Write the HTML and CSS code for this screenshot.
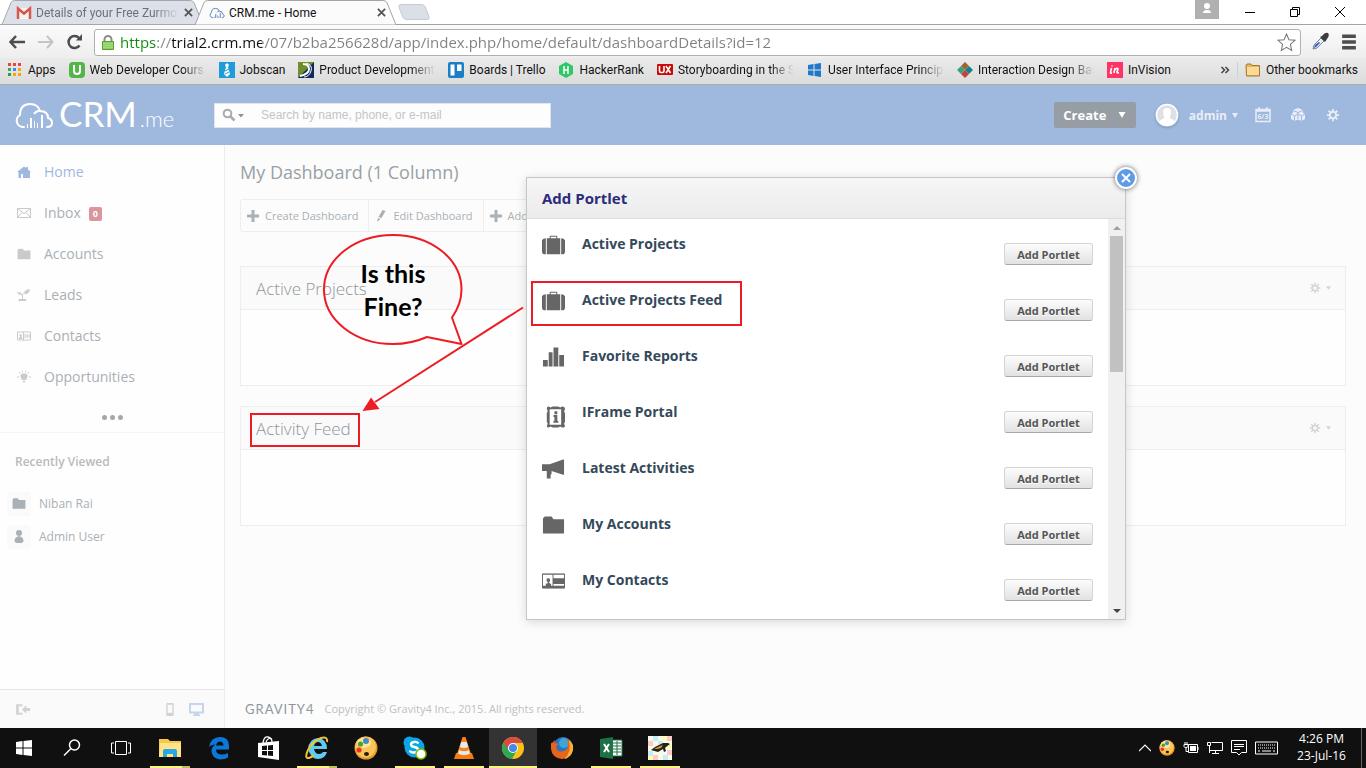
FILE: index.html
```html
<!DOCTYPE html>
<html lang="en">
<head>
<meta charset="utf-8">
<title>CRM.me - Home</title>
<link rel="stylesheet" href="styles.css">
</head>
<body>
<svg class="defs" aria-hidden="true">
  <symbol id="i-folder" viewBox="0 0 24 20"><path d="M1 3 3 1h7l2 3h11v15H1z"/></symbol>
  <symbol id="i-case" viewBox="0 0 24 20"><path d="M0 5Q1 3 4 3v17H2Q0 19 0 17zM5 3h3V1q0-1 1-1h6q1 0 1 1v2h3v17H5zM9 3h6V1.500H9zM20 3q3 0 4 2v12q0 2-2 3h-2z"/></symbol>
  <symbol id="i-card" viewBox="0 0 24 16"><path fill-rule="evenodd" d="M1 0h22q1 0 1 1v14q0 1-1 1H1q-1 0-1-1V1q0-1 1-1zM1 1.500V13h3v-2l2-1V9q-2-1-1-3.500 1.500-1 3 0Q9 8 7.500 9v1l2 1v2H11V1.500zM12 1.500V5h11V1.500zM12 11v2h11v-2z"/></symbol>
  <symbol id="i-cloud" viewBox="0 0 40 27"><path d="M10 25H8A6.500 6.500 0 0 1 6 13Q6 2 16 2q8 0 10 7 8 0 8 7 4 1 4 5 0 4-5 4" fill="none" stroke="currentColor" stroke-width="2" stroke-linecap="round"/><path d="M25 9q-3 0-5 3" fill="none" stroke="currentColor" stroke-width="2"/><path d="M13 22h1v4h-1zM16 16h2v10h-2zM20 19h1v7h-1zM23 21h1v5h-1zM27 13h2v13h-2z" fill="currentColor"/></symbol>
  <symbol id="i-gear" viewBox="0 0 16 16"><path d="M8 1v14M1 8h14M3 3l10 10M13 3 3 13" stroke="currentColor" stroke-width="2"/><circle cx="8" cy="8" r="3.500" stroke="currentColor" stroke-width="2" class="gear-hub"/></symbol>
  <symbol id="i-palette" viewBox="0 0 24 24"><circle cx="12" cy="12" r="11.500" fill="#e79a2c"/><circle cx="11.500" cy="11" r="10.500" fill="#fbc459"/><ellipse cx="10" cy="7" rx="7" ry="5" fill="#ffe49a"/><circle cx="12" cy="5" r="3" fill="#3b8fc0"/><circle cx="6.500" cy="8" r="2.600" fill="#49a32c"/><circle cx="5" cy="14" r="2.600" fill="#e8342a"/><ellipse cx="12.500" cy="18" rx="2.500" ry="2" fill="#2a1a0a"/></symbol>
  <symbol id="i-plus" viewBox="0 0 12 12"><path d="M4.500 0h3v4.500H12v3H7.500V12h-3V7.500H0v-3h4.500z"/></symbol>
</svg>

<header class="browser">
  <div class="tabstrip">
    <div class="tab tab-back">
      <svg class="tab-shape" viewBox="0 0 206 25" preserveAspectRatio="none"><path d="M1 24.500 10 3q1-2.500 4-2.500h178q3 0 4 2.500l9 21.500z" fill="#dce1e9" stroke="#a3a7ad"/></svg>
      <svg class="ic16" viewBox="0 0 16 16"><path d="M2 3h12v11H2z" fill="#f3f3f3"/><path d="M2 14V3.500l6 5 6-5V14" fill="none" stroke="#d8594c" stroke-width="2.500"/></svg>
      <span class="tab-text faded">Details of your Free Zurmo</span>
      <button class="tab-x" aria-label="Close tab"><svg viewBox="0 0 10 10"><path d="m1 1 8 8M9 1 1 9"/></svg></button>
    </div>
    <div class="tab tab-front">
      <svg class="tab-shape" viewBox="0 0 206 25" preserveAspectRatio="none"><path d="M1 25 10 3q1-2.500 4-2.500h178q3 0 4 2.500l9 22z" fill="#fbfbfb" stroke="#a3a3a3"/></svg>
      <svg class="ic16 cloudblue"><use href="#i-cloud"/></svg>
      <span class="tab-text">CRM.me - Home</span>
      <button class="tab-x" aria-label="Close tab"><svg viewBox="0 0 10 10"><path d="m1 1 8 8M9 1 1 9"/></svg></button>
    </div>
    <button class="newtab" aria-label="New tab"><svg viewBox="0 0 34 17"><path d="M4 1h20q3 0 4 2l4 10q1 3-2 3H10q-3 0-4-2L2 4Q1 1 4 1z" fill="#dbe0e7" stroke="#c6cbd2"/></svg></button>
    <div class="winctl">
      <button class="profile" aria-label="Profile"><svg viewBox="0 0 24 19"><path d="M12 3a2.500 2.500 0 0 1 0 6 2.500 2.500 0 0 1 0-6zM8 13q0-3 4-3t4 3z" fill="#fff"/></svg></button>
      <button aria-label="Minimize"><svg viewBox="0 0 12 12"><path d="M1 6.500h10"/></svg></button>
      <button aria-label="Restore"><svg viewBox="0 0 12 12"><path d="M1.500 3.500h7v7h-7zM3.500 3.500v-2h7v7h-2"/></svg></button>
      <button aria-label="Close"><svg viewBox="0 0 12 12"><path d="m1 1 10 10M11 1 1 11"/></svg></button>
    </div>
  </div>
  <div class="toolbar">
    <button aria-label="Back"><svg viewBox="0 0 16 14"><path d="M7 1 1.500 7 7 13M2 7h14" fill="none" stroke="#4d4d4d" stroke-width="2.500"/></svg></button>
    <button aria-label="Forward"><svg viewBox="0 0 16 14"><path d="m9 1 5.500 6L9 13M14 7H0" fill="none" stroke="#c4c4c4" stroke-width="2"/></svg></button>
    <button aria-label="Reload"><svg viewBox="0 0 16 16"><path d="M12.500 11.500A6 6 0 1 1 12 4" fill="none" stroke="#4d4d4d" stroke-width="2.500"/><path d="M9 6.500h6V0z" fill="#4d4d4d"/></svg></button>
    <div class="omnibox">
      <svg class="lock" viewBox="0 0 12 15"><path d="M2.500 7V4.500a3.500 3.500 0 0 1 7 0V7" fill="none" stroke="#8c8c8c" stroke-width="2"/><path d="M.5 6.500h11v8H.5z" fill="#8bd160" stroke="#5a9e35"/><path d="M1 8.500h10M1 10.500h10M1 12.500h10" stroke="#b3e493" opacity=".6"/></svg>
      <input class="url" aria-label="Address" value="https://trial2.crm.me/07/b2ba256628d/app/index.php/home/default/dashboardDetails?id=12">
      <button class="star" aria-label="Bookmark"><svg viewBox="0 0 18 18"><path d="m9 1 2.300 5.300 5.700.6-4.300 3.900 1.200 5.700L9 13.600l-4.900 2.900 1.200-5.700L1 6.900l5.700-.6z" fill="#fff" stroke="#777"/></svg></button>
    </div>
    <button aria-label="Colour picker"><svg class="picker" viewBox="0 0 19 19"><path d="m2 17 1-4 7-7 3 3-7 7z" fill="#e9edf5" stroke="#77829a"/><path d="m3 16 1-3 4-3 1 1-4 4z" fill="#3159c9"/><path d="m9 5 2-1q3-4 6-3 2 2-1 6l-2 3z" fill="#3c3c3c"/></svg></button>
    <button aria-label="Menu"><svg viewBox="0 0 14 14"><path d="M1 2h12M1 7h12M1 12h12" stroke="#4d4d4d" stroke-width="3"/></svg></button>
  </div>
  <nav class="bookmarks" aria-label="Bookmarks">
    <a href="#"><svg class="ic16" viewBox="0 0 16 16"><path d="M1 1h3v3H1zM6 1h3v3H6zM11 1h3v3h-3z" fill="#e8453c"/><path d="M1 6h3v3H1z" fill="#34a853"/><path d="M6 6h3v3H6z" fill="#4285f4"/><path d="M11 6h3v3h-3zM6 11h3v3H6zM11 11h3v3h-3z" fill="#f7a800"/><path d="M1 11h3v3H1z" fill="#2e9b50"/></svg><span>Apps</span></a>
    <a href="#"><svg class="ic16" viewBox="0 0 16 16"><rect width="16" height="16" rx="4" fill="#51b548"/><path d="M5 3v6q0 3 3 3t3-3V3" fill="none" stroke="#fff" stroke-width="2"/></svg><span class="faded">Web Developer Cours</span></a>
    <a href="#"><svg class="ic16" viewBox="0 0 16 16"><path d="M0 0h16v16H0z" fill="#1d9cd9"/><path d="m8 1 2 2-1 2 2 7-3 3-3-3 2-7-1-2z" fill="#fff"/><path d="m6 9 4-2M6 12l4-2" stroke="#1d9cd9"/></svg><span>Jobscan</span></a>
    <a href="#"><svg class="ic16" viewBox="0 0 16 16"><path d="M0 0h16v16H0z" fill="#6f8f2f"/><path d="M0 16 16 0v16z" fill="#112a5c"/><path d="M5 2q6 0 6 5t-9 7" fill="none" stroke="#fff" stroke-width="2"/><path d="M8 1q7 2 5 8t-7 6" fill="none" stroke="#fff"/></svg><span class="faded">Product Development</span></a>
    <a href="#"><svg class="ic16" viewBox="0 0 16 16"><rect width="16" height="16" rx="2" fill="#1a7fc4"/><path d="M2.500 2.500h4v11h-4zM9 2.500h4.500V9H9z" fill="#fff"/></svg><span>Boards | Trello</span></a>
    <a href="#"><svg class="ic16" viewBox="0 0 16 16"><path d="m8 0 7 4v8l-7 4-7-4V4z" fill="#2ec866"/><path d="M6 4v8M10 4v8M6 8h4" stroke="#fff" stroke-width="1.500"/></svg><span>HackerRank</span></a>
    <a href="#"><svg class="ic16" viewBox="0 0 16 16"><rect y="2" width="16" height="11" rx="1" fill="#c90a0a"/><path d="M2.500 4v5q0 1.500 1.500 1.500h1.500Q7 10.500 7 9V4M9 4l4.500 7M13.500 4 9 11" fill="none" stroke="#fff" stroke-width="1.600"/></svg><span class="faded">Storyboarding in the S</span></a>
    <a href="#"><svg class="ic16" viewBox="0 0 16 16"><path d="m1 3 5.500-1v5.500H1zM7.500 2 14 1v6.500H7.500zM1 8.500h5.500V14L1 13zM7.500 8.500H14V15l-6.500-1z" fill="#1f78c8"/></svg><span class="faded">User Interface Principl</span></a>
    <a href="#"><svg class="ic16" viewBox="0 0 16 16"><path d="m8 0 4 4-4 4-4-4z" fill="#a75e30"/><path d="m4 4 4 4-4 4-4-4z" fill="#3aa17f"/><path d="m12 4 4 4-4 4-4-4z" fill="#0f8488"/><path d="m8 8 4 4-4 4-4-4z" fill="#c9403c"/></svg><span class="faded">Interaction Design Bas</span></a>
    <a href="#"><svg class="ic16" viewBox="0 0 16 16"><path d="M0 0h16v16H0z" fill="#ff3366"/><path d="m4.500 6-1 4.500q0 1 1.500.5M5 3.500v1M7 11l1-5M7.500 8q3-3 3.500-1l-1 3q0 1.500 2 .5" fill="none" stroke="#fff" stroke-width="1.600"/></svg><span>InVision</span></a>
    <button class="more" aria-label="More bookmarks"><svg viewBox="0 0 9 8"><path d="m1 1 3 3-3 3M5 1l3 3-3 3" fill="none" stroke="#444" stroke-width="1.500"/></svg></button>
    <a href="#" class="other"><svg class="ic16" viewBox="0 0 16 16"><path d="M1 3.500 2 2h4l1 1.500h7.500V14h-13z" fill="#e6b765" stroke="#a87628"/><path d="M2 5h12v8H2z" fill="#fbdb94"/></svg><span>Other bookmarks</span></a>
  </nav>
</header>

<div class="apphead">
  <a class="logo" href="#" aria-label="CRM.me"><svg viewBox="0 0 40 27"><use href="#i-cloud"/></svg><span class="crm">CRM</span><span class="dotme">.me</span></a>
  <div class="search">
    <button aria-label="Search scope"><svg viewBox="0 0 24 14"><circle cx="5.500" cy="5.500" r="3.800" fill="none" stroke="#a7abb0" stroke-width="2"/><path d="m8.500 8.500 4 4" stroke="#a7abb0" stroke-width="2.500"/><path d="M16 6h6l-3 3.500z" fill="#8f9499"/></svg></button>
    <input type="text" aria-label="Search" placeholder="Search by name, phone, or e-mail">
  </div>
  <div class="headright">
    <button class="create">Create<svg viewBox="0 0 8 7"><path d="M0 0h8L4 7z"/></svg></button>
    <svg class="avatar" viewBox="0 0 24 24"><circle cx="12" cy="12" r="10.500" fill="#dde0e4" stroke="#fff" stroke-width="1.500"/><path d="M4 20q1-4 5-4.500v-2Q6 5 12 5t3 8.500v2q4 .5 5 4.500-8 5-16 0z" fill="#fff"/></svg>
    <button class="admin">admin<svg viewBox="0 0 6 5"><path d="M0 0h6L3 5z"/></svg></button>
    <button class="hicon" aria-label="Calendar"><svg viewBox="0 0 16 16"><path d="M1 2.500h14v12H1zM1 4h14M4 0v3M12 0v3" fill="none" stroke="currentColor" stroke-width="1.500"/><text x="8" y="12" text-anchor="middle" class="caltext">6/3</text></svg></button>
    <button class="hicon" aria-label="Modules"><svg viewBox="0 0 16 16"><path d="m8 1 5 2v3l2 1v5l-3.500 2L8 12.500 4.500 14 1 12V7l2-1V3z" fill="currentColor"/><path d="m3 3.500 5 2 5-2M8 5.500V12M1 7l3.500 2L8 7l3.500 2L15 7M4.500 9v5M11.500 9v5" fill="none" stroke="#9fb8de"/></svg></button>
    <button class="hicon" aria-label="Settings"><svg viewBox="0 0 16 16"><use href="#i-gear"/></svg></button>
  </div>
</div>

<div class="main">
  <aside class="side">
    <nav class="menu">
      <a href="#" class="on"><svg viewBox="0 0 14 12"><path d="m0 6 7-5.500 2 1.500V1h2v2.500l3 2.500h-1v6H6V8H4v4H1.500V6z"/></svg>Home</a>
      <a href="#"><svg viewBox="0 0 14 10"><path d="M.5.5h13v9H.5zl6.500 5 6.500-5M.5 9.500l4.500-5M13.500 9.500 9 4.500" fill="none" stroke="currentColor"/></svg>Inbox<span class="badge">0</span></a>
      <a href="#"><svg viewBox="0 0 24 20"><use href="#i-folder"/></svg>Accounts</a>
      <a href="#"><svg viewBox="0 0 14 12"><path d="M2 10h7v2H1zM5 5h1v5H5zM6 5q1-4 7-5-1 6-6 5l3-3zM0 3q5 0 5 3-4 0-5-3z"/></svg>Leads</a>
      <a href="#"><svg viewBox="0 0 14 9"><path d="M.5.5h13v8H.5zM6.500 0v9M7 3.500h6M7 5.500h6" fill="none" stroke="currentColor"/><path d="M3.500 2.500q2 0 1 2.500l1 2.500h-4L3 5q-1-2.500.5-2.500z"/></svg>Contacts</a>
      <a href="#"><svg viewBox="0 0 14 12"><path d="M7 2.500q4 0 3.500 3.500L9 9H5L3.500 6Q3 2.500 7 2.500zM5.500 10h3L7 12z"/><path d="M0 6h2M12 6h2M2 1l1.500 1.500M12 1l-1.500 1.500M5 0l.5 1.500M9 0l-.5 1.500" stroke="currentColor"/></svg>Opportunities</a>
    </nav>
    <button class="dots" aria-label="More"><i></i><i></i><i></i></button>
    <section class="recent">
      <h2>Recently Viewed</h2>
      <a href="#"><span class="tile"><svg viewBox="0 0 24 20"><use href="#i-folder"/></svg></span>Niban Rai</a>
      <a href="#"><span class="tile"><svg viewBox="0 0 14 13"><circle cx="7" cy="3" r="3"/><path d="M7 6q4.500 1 4.500 5 0 2-4.500 2t-4.500-2q0-4 4.500-5z"/></svg></span>Admin User</a>
    </section>
    <div class="sidefoot">
      <button aria-label="Collapse"><svg viewBox="0 0 14 12"><path d="M7 1H1v10h6V9H3.500V3H7zM6.500 6l4-4v2.500H14v3h-3.500V10z" fill="#d3d3d3"/></svg></button>
      <button class="phone" aria-label="Mobile view"><svg viewBox="0 0 8 14"><path fill-rule="evenodd" d="M1 0h6q1 0 1 1v12q0 1-1 1H1q-1 0-1-1V1q0-1 1-1zM1.500 2v8.500h5V2z" fill="#d3d3d3"/></svg></button>
      <button aria-label="Desktop view"><svg viewBox="0 0 15 13"><path fill-rule="evenodd" d="M0 0h15v10.500H9.500L11 12v1H4v-1l1.500-1.500H0zM2 2v6.500h11V2z" fill="#c6d5eb"/></svg></button>
    </div>
  </aside>

  <main class="content">
    <h1>My Dashboard (1 Column)</h1>
    <div class="actions">
      <button><svg viewBox="0 0 12 12"><use href="#i-plus"/></svg>Create Dashboard</button>
      <button><svg viewBox="0 0 12 12"><path d="m7.500 0 3 1-4 7-3-1zM3 8l2.500 1L2 12z"/></svg>Edit Dashboard</button>
      <button><svg viewBox="0 0 12 12"><use href="#i-plus"/></svg>Add Portlet</button>
    </div>
    <section class="portlet">
      <header><h2>Active Projects</h2><button aria-label="Portlet options"><svg class="pgear" viewBox="0 0 16 16"><use href="#i-gear"/></svg><svg class="caret" viewBox="0 0 6 4"><path d="M0 0h6L3 4z"/></svg></button></header>
      <div class="pbody"></div>
    </section>
    <section class="portlet">
      <header><h2>Activity Feed</h2><button aria-label="Portlet options"><svg class="pgear" viewBox="0 0 16 16"><use href="#i-gear"/></svg><svg class="caret" viewBox="0 0 6 4"><path d="M0 0h6L3 4z"/></svg></button></header>
      <div class="pbody"></div>
    </section>
    <footer><span class="gravity">GRAVITY4</span><span>Copyright © Gravity4 Inc., 2015. All rights reserved.</span></footer>
  </main>

  <div class="modal" role="dialog" aria-labelledby="dlg-title">
    <h2 id="dlg-title">Add Portlet</h2>
    <button class="close" aria-label="Close"><svg viewBox="0 0 10 10"><path d="m1 1 8 8M9 1 1 9"/></svg></button>
    <div class="modalbody">
      <ul>
        <li><svg viewBox="0 0 24 20"><use href="#i-case"/></svg><h3>Active Projects</h3><button>Add Portlet</button></li>
        <li><svg viewBox="0 0 24 20"><use href="#i-case"/></svg><h3>Active Projects Feed</h3><button>Add Portlet</button></li>
        <li><svg viewBox="0 0 24 20"><path d="M1 13h5v7H1zM7 5h4v15H7zM12 0h5v20h-5zM18 8h5v12h-5z"/></svg><h3>Favorite Reports</h3><button>Add Portlet</button></li>
        <li><svg class="tall" viewBox="0 0 24 24"><path fill-rule="evenodd" d="M5 3q0-2 2-2l2 1 2-1h6l2 1 2-1q3 0 3 3l-1 2 1 2v9l-1 2 1 2q0 2-3 2l-2-1-2 1h-6l-2-1-2 1q-2 0-2-2l1-2-1-2V8l1-2zM8 4v16h12V4z"/><path d="M13 6h3v3h-3zM12 10h4v6h1v2h-5v-2h1v-4h-1z"/></svg><h3>IFrame Portal</h3><button>Add Portlet</button></li>
        <li><svg viewBox="0 0 24 20"><path d="M0 5h8l14-5h1v16h-1L10 12v3l-1 1v4H5v-8H0z"/></svg><h3>Latest Activities</h3><button>Add Portlet</button></li>
        <li><svg viewBox="0 0 24 20"><use href="#i-folder"/></svg><h3>My Accounts</h3><button>Add Portlet</button></li>
        <li><svg viewBox="0 0 24 16"><use href="#i-card"/></svg><h3>My Contacts</h3><button>Add Portlet</button></li>
      </ul>
      <div class="scroll"><svg viewBox="0 0 8 4"><path d="M0 4h8L4 0z" fill="#a0a0a0"/></svg><i></i><svg class="down" viewBox="0 0 8 4"><path d="M0 0h8L4 4z" fill="#444"/></svg></div>
    </div>
  </div>

  <div class="notes">
    <svg viewBox="0 0 280 190"><path d="M129 83.500Q138.500 70 138.500 55.500C138.500 25 108 1 70 1S1 25 1 55.500 32 110 70 110q18 0 34-7l34.500 7z" fill="none" stroke="#ec1c24" stroke-width="2" stroke-linejoin="round"/><path d="M200 73.500 52 168" stroke="#ec1c24" stroke-width="2"/><path d="m39.500 177 8.500-13.500 8.500 11.500z" fill="#ec1c24"/></svg>
    <p>Is this<br>Fine?</p>
  </div>
  <div class="mark mark-feed"></div>
  <div class="mark mark-row"></div>
</div>

<div class="taskbar">
  <button aria-label="Start"><svg viewBox="0 0 24 24"><path d="m4 6 6.500-1v6.500H4zM11.500 5 20 4v7.500h-8.500zM4 12.500h6.500V19L4 18zM11.500 12.500H20V20l-8.500-1z" fill="#fff"/></svg></button>
  <button aria-label="Search"><svg viewBox="0 0 24 24"><circle cx="14.500" cy="9" r="5" fill="none" stroke="#fff" stroke-width="1.500"/><path d="m11 12.500-7 7" stroke="#fff" stroke-width="1.500"/></svg></button>
  <button aria-label="Task view"><svg viewBox="0 0 24 24"><path d="M6.500 5.500h11v13h-11zM5 7H2.500v10H5M19 7h2.500v10H19" fill="none" stroke="#fff"/></svg></button>
  <button class="run multi" aria-label="File Explorer"><svg viewBox="0 0 24 24"><path d="M1 3h9l2 2h11v16H1z" fill="#f5c84c"/><path d="M2 7h21v14H1z" fill="#ffe28a"/><path d="M5 21v-6q0-2 2-2h10q2 0 2 2v6h-4v-3H9v3z" fill="#27a8e0"/></svg></button>
  <button aria-label="Edge"><svg viewBox="0 0 24 24"><path d="M2 11Q4 1 13 1q9 0 9 9v3.500H9q0 5 6 5 4 0 6-1.500v4.500q-3 2-8 2-8-1-8.500-8.500 0-4 4-6.500Q4 8.500 2 11zm7-1.500h7.500Q16 5.500 13 5.500T9 9.500z" fill="#0b78d8"/></svg></button>
  <button aria-label="Store"><svg viewBox="0 0 24 24"><path d="m2 7 21-2v19L2 21z" fill="#fff"/><path d="M7 7Q8 0 12 1t4 5M10 6q2-5 6-3" fill="none" stroke="#fff" stroke-width="1.300"/><path d="m6 10 5-.5V14H6zM12 9.500l5-.5v5h-5zM6 15h5v4.500L6 19zM12 15h5v5l-5-.5z" fill="#101010"/></svg></button>
  <button class="run multi" aria-label="Internet Explorer"><svg viewBox="0 0 24 24"><path d="M13 2q9 1 9 11H9q1 5 5 5 3 0 4-2h4q-2 7-9 7T3 13Q4 3 13 2zM9 10h8q-1-4-4-4t-4 4z" fill="#5fcdf3"/><path d="M22 6q1-6-6-4Q8 5 3 14q-4 9 1 8 3-1 5-3" fill="none" stroke="#f1c232" stroke-width="2"/></svg></button>
  <button aria-label="Paint"><svg viewBox="0 0 24 24"><use href="#i-palette"/></svg></button>
  <button class="run" aria-label="Skype"><svg viewBox="0 0 24 24"><circle cx="6.500" cy="6.500" r="6" fill="#0da5e8"/><circle cx="16" cy="16" r="6" fill="#0da5e8"/><circle cx="11.500" cy="11.500" r="10" fill="#0da5e8"/><path d="M15.500 7.500Q14 5.500 11 6 8 6.500 8 8.500q0 2 3.500 2.500t3.500 3-4 2.500-4-2" fill="none" stroke="#fff" stroke-width="2.300"/><circle cx="18" cy="18" r="5" fill="#fff" stroke="#7fba00" stroke-width="1.500"/></svg></button>
  <button class="run" aria-label="VLC"><svg viewBox="0 0 24 24"><path d="M4 17h16l2 6H2z" fill="#f07c12"/><path d="m10.500 1h3L19 18q-7 4-14 0z" fill="#f58220"/><path d="m9.300 6h5.400l1.500 5q-4 2-8.400 0zM7 14q5 2.500 10 0l1 3.500q-6 3-12 0z" fill="#e8e8e8"/></svg></button>
  <button class="run active" aria-label="Chrome"><svg viewBox="0 0 24 24"><circle cx="12" cy="12" r="11" fill="#fbc116"/><path d="M12 12 2.500 6.500A11 11 0 0 0 11 23l5-9z" fill="#2da94f"/><path d="M2.500 6.500A11 11 0 0 1 21.700 7H12L7.600 14.500z" fill="#dd4b3e"/><circle cx="12" cy="12" r="5" fill="#fff"/><circle cx="12" cy="12" r="4" fill="#4688f1"/></svg></button>
  <button aria-label="Firefox"><svg viewBox="0 0 24 24"><circle cx="13" cy="11" r="10" fill="#2a75bb"/><circle cx="14" cy="7" r="5" fill="#3fa4d8"/><path d="M1 5q0 3 1 2l3-3-.5 3 4 1-2.500 3q1 5 6 4.500 7-1 6-9-1-3-3-4 9 3 8 11-2 9-11 9.500Q2 22 1 13z" fill="#e8641b"/><path d="M19 4q5 4 4 10-2 8-9 9 8-6 5-19z" fill="#f9b233"/></svg></button>
  <button class="run" aria-label="Excel"><svg viewBox="0 0 24 24"><path d="M12 4h11v16H12z" fill="#fff" stroke="#1e7145"/><path d="M14 7h8M14 10h8M14 13h8M14 16h8M18 5v14" stroke="#1e7145"/><path d="m1 3 13-2v22L1 21z" fill="#1e7145"/><path d="m5 8 5 8M10 8l-5 8" stroke="#fff" stroke-width="2"/></svg></button>
  <button class="run" aria-label="Image viewer"><svg viewBox="0 0 24 24"><path d="M0 0h24v24H0z" fill="#f7fbe8"/><path d="M5 0h5v5H5zM0 15h5v5H0zM15 19h5v5h-5zM10 5h5v5h-5z" fill="#c6ecfb"/><path d="M19 0h5v5h-5zM0 5h5v5H0zM19 14h5v5h-5zM5 19h5v5H5z" fill="#ffc9c9"/><path d="M15 0h4v5h-4zM0 20h5v4H0zM19 8h5v4h-5z" fill="#ffffb0"/><path d="m3 14 4-3 8-4h5l2 1-4 3-1 1 1 3-2 1-1-3-5 3z" fill="#222"/><path d="m6 13 6-3 3-1-2 3-4 1z" fill="#e29a1a"/></svg></button>
  <div class="tray">
    <svg viewBox="0 0 12 12"><path d="m0 9 6-6 6 6" fill="none" stroke="#fff" stroke-width="1.200"/></svg>
    <svg viewBox="0 0 24 24" class="w16"><use href="#i-palette"/></svg>
    <svg viewBox="0 0 16 12" class="w16"><path d="M5.500 2.500h9v8h-9zM15 5v3M2 0v2M4 0v2M1 2.500h4v2q0 1-2 1t-2-1zM3 6v3.500h2" fill="none" stroke="#fff"/><path d="M7 4h6v5H7z" fill="#fff"/></svg>
    <svg viewBox="0 0 16 14" class="w16"><path d="M4.500 1.500h11v8H3M5 12.500h7M8.500 10v2M.5 1.500h3v3h-3zM2.500 5v7" fill="none" stroke="#fff"/></svg>
    <svg viewBox="0 0 16 16" class="w16"><path d="M.5.500h15v12h-5L8 15l-2.500-2.500h-5zM3 4.500h10M3 6.500h10M3 9.500h6" fill="none" stroke="#fff"/></svg>
    <svg viewBox="0 0 23 13" class="w23"><path d="M.5.500h22v12H.5z" fill="none" stroke="#fff"/><path d="M3 3.500h18M3 6.500h18" stroke="#fff" stroke-dasharray="1 1"/><path d="M3 9.500h2M7 9.500h9M18 9.500h2" stroke="#fff"/></svg>
    <div class="clock"><span>4:26 PM</span><span>23-Jul-16</span></div>
  </div>
</div>
</body>
</html>
```
FILE: styles.css
```css
* { box-sizing: border-box; }
body { margin: 0; min-height: 100vh; display: flex; flex-direction: column; font-family: "Open Sans", "Noto Sans", sans-serif; font-size: 12px; background: #fcfcfc; }
button { border: 0; padding: 0; background: none; font: inherit; color: inherit; display: flex; align-items: center; justify-content: center; }
a { color: inherit; text-decoration: none; }
h1, h2, h3, ul, p { margin: 0; padding: 0; font-weight: 400; }
svg { display: block; flex: none; fill: currentColor; }
.defs { display: none; }
.ic16 { width: 16px; height: 16px; }

/* browser window */
.browser { font-family: Roboto, "Open Sans", sans-serif; color: #111; }
.tabstrip { display: flex; height: 25px; background: #fff; border-bottom: 1px solid #a3a3a3; padding-left: 1px; }
.tab { position: relative; width: 203px; height: 25px; display: flex; align-items: center; gap: 4px; padding: 0 11px 0 15px; margin-right: -10px; }
.tab-front { z-index: 1; margin-right: 0; }
.tab-shape { position: absolute; left: 0; top: 0; width: 100%; height: 25px; }
.tab > :not(.tab-shape) { position: relative; }
.tab-text { flex: 1; white-space: nowrap; overflow: hidden; }
.tab-back .tab-text { color: #6d7178; }
.faded { -webkit-mask-image: linear-gradient(to left, transparent, #000 24px); mask-image: linear-gradient(to left, transparent, #000 24px); }
.tab-x { width: 10px; height: 10px; }
.tab-x svg { width: 9px; height: 9px; stroke: #555; stroke-width: 2; }
.cloudblue { color: #3a6ea8; }
.newtab { align-self: center; }
.newtab svg { width: 34px; height: 18px; }
.winctl { margin-left: auto; display: flex; padding-right: 4px; }
.winctl button { width: 45px; height: 24px; }
.winctl svg { width: 12px; height: 12px; fill: none; stroke: #000; }
.winctl .profile { width: 24px; height: 19px; background: #b0b0b0; margin-right: 8px; }
.winctl .profile svg { width: 24px; height: 19px; stroke: none; }
.toolbar { display: flex; align-items: center; height: 33px; padding: 0 9px 0 9px; gap: 13px; background: linear-gradient(#fbfbfb, #eeeeee); }
.toolbar > button { width: 16px; }
.toolbar > button svg { width: 16px; height: 16px; }
.toolbar .picker { width: 19px; height: 19px; }
.omnibox { flex: 1; display: flex; align-items: center; height: 27px; margin-top: 2px; margin-left: -2px; margin-right: -2px; padding: 0 4px 0 7px; background: #fff; border: 1px solid #b0b0b0; border-radius: 3px; }
.lock { width: 12px; height: 15px; }
.url { flex: 1; min-width: 0; height: 24px; border: 0; padding: 0 0 2px; margin-left: 6px; font: 15px "Open Sans", sans-serif; color: transparent; background: linear-gradient(to right, #0d8a0d 37px, #888 37px, #888 52px, #111 52px, #111 142px, #808080 142px); -webkit-background-clip: text; background-clip: text; outline: 0; }
.star svg { width: 19px; height: 19px; }
.bookmarks { display: flex; align-items: center; gap: 13px; height: 27px; padding: 0 8px 2px 7px; background: linear-gradient(#eaeaea, #dcdcdc); border-bottom: 1px solid #aaa; white-space: nowrap; }
.bookmarks a { display: flex; align-items: center; gap: 5px; }
.bookmarks .faded { width: 116px; }
.more { margin-left: auto; }
.more svg { width: 10px; height: 8px; }
.bookmarks .other { border-left: 1px solid #c9d2dd; padding-left: 7px; margin-left: -6px; }

/* application header */
.apphead { display: flex; align-items: center; height: 60px; padding: 0 26px 0 14px; background: #9fb8de; color: #fff; --hub: #9fb8de; }
.logo { display: flex; align-items: baseline; width: 200px; }
.logo svg { width: 40px; height: 27px; fill: none; align-self: center; }
.crm { font: 400 35px/42px Lato, sans-serif; margin-left: 5px; padding-top: 2px; }
.dotme { font: 300 22px/42px Lato, sans-serif; margin-left: 3px; }
.search { display: flex; align-items: center; width: 337px; height: 25px; background: #fdfdfd; border: 1px solid #e1e4e8; }
.search button { width: 46px; padding-right: 8px; }
.search button svg { width: 24px; height: 14px; }
.search input { flex: 1; min-width: 0; height: 23px; padding: 0; border: 0; background: none; font: 12px "Liberation Sans", Arial, sans-serif; }
.search input::placeholder { color: #c3c5c8; }
.headright { margin-left: auto; display: flex; align-items: center; }
.create { height: 26px; width: 82px; gap: 12px; background: #969da4; border-radius: 2px; font-size: 13px; font-weight: 700; }
.create svg { width: 8px; height: 6px; }
.avatar { width: 24px; height: 24px; margin: 0 10px 0 19px; border-radius: 50%; box-shadow: 0 1px 2px #8298bb; }
.admin { gap: 5px; color: #e8eef7; font-weight: 700; margin-right: 7px; }
.admin svg { width: 6px; height: 5px; }
.hicon { width: 35px; height: 20px; color: #e8eef7; }
.hicon svg { width: 16px; height: 16px; }
.hicon:last-child { margin-right: -10px; }
.hicon:last-child svg { width: 14px; height: 14px; }
.caltext { font: 700 7px "Open Sans", sans-serif; }
.gear-hub { fill: var(--hub); }

/* layout */
.main { position: relative; flex: 1; display: flex; --hub: #fafafa; }
.side { width: 225px; display: flex; flex-direction: column; background: #fefefe; border-right: 1px solid #ececec; color: #a9b0b6; }
.menu { padding-top: 6px; }
.menu a { display: flex; align-items: center; height: 41px; padding-left: 17px; font-size: 14px; font-weight: 500; }
.menu svg { width: 14px; height: 12px; margin-right: 13px; color: #c9cacb; }
.menu .on, .menu .on svg { color: #9fb8de; }
.badge { width: 13px; height: 14px; margin: 2px 0 0 8px; border-radius: 2px; background: #d9969d; color: #fff; font-size: 9px; line-height: 14px; font-weight: 700; text-align: center; }
.dots { gap: 3px; height: 36px; padding-top: 6px; border-bottom: 1px solid #f6f6f6; }
.dots i { width: 5px; height: 5px; border-radius: 50%; background: #a5a8aa; }
.recent h2 { padding: 19px 0 15px 15px; font-size: 12px; line-height: 20px; font-weight: 600; color: #bababa; }
.recent a { display: flex; align-items: center; gap: 8px; height: 33px; padding-left: 7px; font-weight: 500; }
.tile { width: 24px; height: 24px; display: flex; align-items: center; justify-content: center; background: #fafafa; border-radius: 3px; }
.tile svg { width: 14px; height: 13px; }
.sidefoot { display: flex; align-items: center; gap: 15px; height: 39px; margin-top: auto; padding: 0 20px 0 15px; background: #fafafa; border-top: 1px solid #e6e6e6; }
.sidefoot svg { width: 15px; height: 13px; }
.sidefoot .phone { margin-left: auto; }
.sidefoot .phone svg { width: 8px; }

.content { flex: 1; display: flex; flex-direction: column; padding: 15px 20px 0 15px; background: #fcfcfc; color: #a9b0b6; }
.content h1 { font-size: 18px; font-weight: 500; line-height: 24px; margin-bottom: 15px; color: #98a1a6; }
.actions { align-self: flex-start; display: flex; height: 33px; border: 1px solid #eee; border-radius: 3px; margin-bottom: 34px; }
.actions button { gap: 6px; padding: 0 10px 0 6px; border-right: 1px solid #eee; font-size: 11px; font-weight: 500; }
.actions button:last-child { border-right: 0; }
.actions svg { width: 12px; height: 12px; }
.portlet { border: 1px solid #eee; margin-bottom: 20px; }
.portlet header { display: flex; align-items: center; justify-content: space-between; height: 43px; padding: 0 14px 0 15px; background: #fafafa; border-bottom: 1px solid #eee; }
.portlet h2 { font-size: 17px; font-weight: 300; color: #8e979c; }
.portlet button { gap: 5px; color: #d3d6d8; }
.pgear { width: 12px; height: 12px; }
.caret { width: 5px; height: 4px; }
.pbody { height: 75px; background: #fefefe; }
.content footer { display: flex; align-items: center; gap: 10px; height: 39px; margin-top: auto; padding-left: 5px; font-size: 11px; color: #bcc0c3; }
.gravity { font-family: Lato, sans-serif; font-size: 13px; letter-spacing: 1px; color: #8f979c; }

/* portlet dialog */
.modal { position: absolute; top: 32px; right: 240px; width: 600px; background: #fff; border: 1px solid #c6c6c6; box-shadow: 0 2px 10px rgba(0,0,0,.15); }
.modal > h2 { height: 41px; padding-left: 15px; background: linear-gradient(#f6f6f6, #ebebeb); border-bottom: 1px solid #dcdcdc; color: #2c2c7c; font-size: 15px; line-height: 40px; font-weight: 700; }
.close { position: absolute; top: -11px; right: -12px; width: 22px; height: 22px; border: 2px solid #fff; border-radius: 50%; background: #5e9ae6; box-shadow: 0 0 5px rgba(0,0,0,.6); }
.close svg { width: 10px; height: 10px; stroke: #fff; stroke-width: 2; }
.modalbody { display: flex; height: 400px; overflow: hidden; }
.modalbody ul { flex: 1; list-style: none; }
.modalbody li { display: flex; align-items: flex-start; height: 56px; padding: 14px 15px 0 15px; color: #666; }
.modalbody li svg { width: 23px; height: 20px; margin: 2px 17px 0 0; }
.modalbody li .tall { height: 24px; margin-top: 4px; }
.modalbody h3 { flex: 1; color: #34495a; font-size: 14px; line-height: 22px; font-weight: 700; }
.modalbody li button { width: 89px; height: 22px; margin-top: 10px; border: 1px solid #d5d5d5; border-bottom-color: #a8a8a8; border-radius: 3px; background: linear-gradient(#fcfcfc, #e2e2e2); color: #555; font-size: 11px; font-weight: 700; text-shadow: 0 1px 0 #fff; }
.scroll { width: 17px; background: #f0f0f0; display: flex; flex-direction: column; align-items: center; padding: 7px 0 6px; }
.scroll svg { width: 8px; height: 4px; }
.scroll i { width: 13px; height: 136px; margin-top: 6px; background: #c1c1c1; }
.scroll .down { margin-top: auto; }

/* annotations */
.notes { position: absolute; left: 323px; top: 89px; width: 280px; pointer-events: none; }
.notes svg { width: 280px; height: 190px; }
.notes p { position: absolute; top: 23px; left: 0; width: 140px; text-align: center; font: 700 25px/33px Lato, sans-serif; color: #000; }
.mark { position: absolute; border: 2px solid #ec1c24; pointer-events: none; }
.mark-feed { left: 250px; top: 268px; width: 110px; height: 34px; }
.mark-row { right: 624px; top: 136px; width: 211px; height: 45px; }

/* taskbar */
.taskbar { display: flex; gap: 1px; height: 40px; background: #101010; color: #fff; }
.taskbar button { width: 48px; height: 40px; }
.taskbar button:first-child { width: 47px; }
.taskbar button svg { width: 24px; height: 24px; }
.run { background: linear-gradient(#fdf380, #fdf380) center bottom / 40px 2px no-repeat; }
.multi { background: linear-gradient(to right, #fdf380 32px, #c4bc62 32px) center bottom / 40px 2px no-repeat; }
.active { background: linear-gradient(#fdf380, #fdf380) center bottom / 48px 2px no-repeat #333; }
.tray { margin-left: auto; display: flex; align-items: center; gap: 8px; padding-right: 4px; }
.tray svg { width: 12px; height: 16px; }
.tray .w16 { width: 16px; }
.tray .w23 { width: 23px; }
.clock { display: flex; flex-direction: column; align-items: center; width: 66px; padding-right: 14px; margin-left: 10px; border-right: 1px solid #666; line-height: 17px; height: 40px; padding-top: 2px; white-space: nowrap; }
```
